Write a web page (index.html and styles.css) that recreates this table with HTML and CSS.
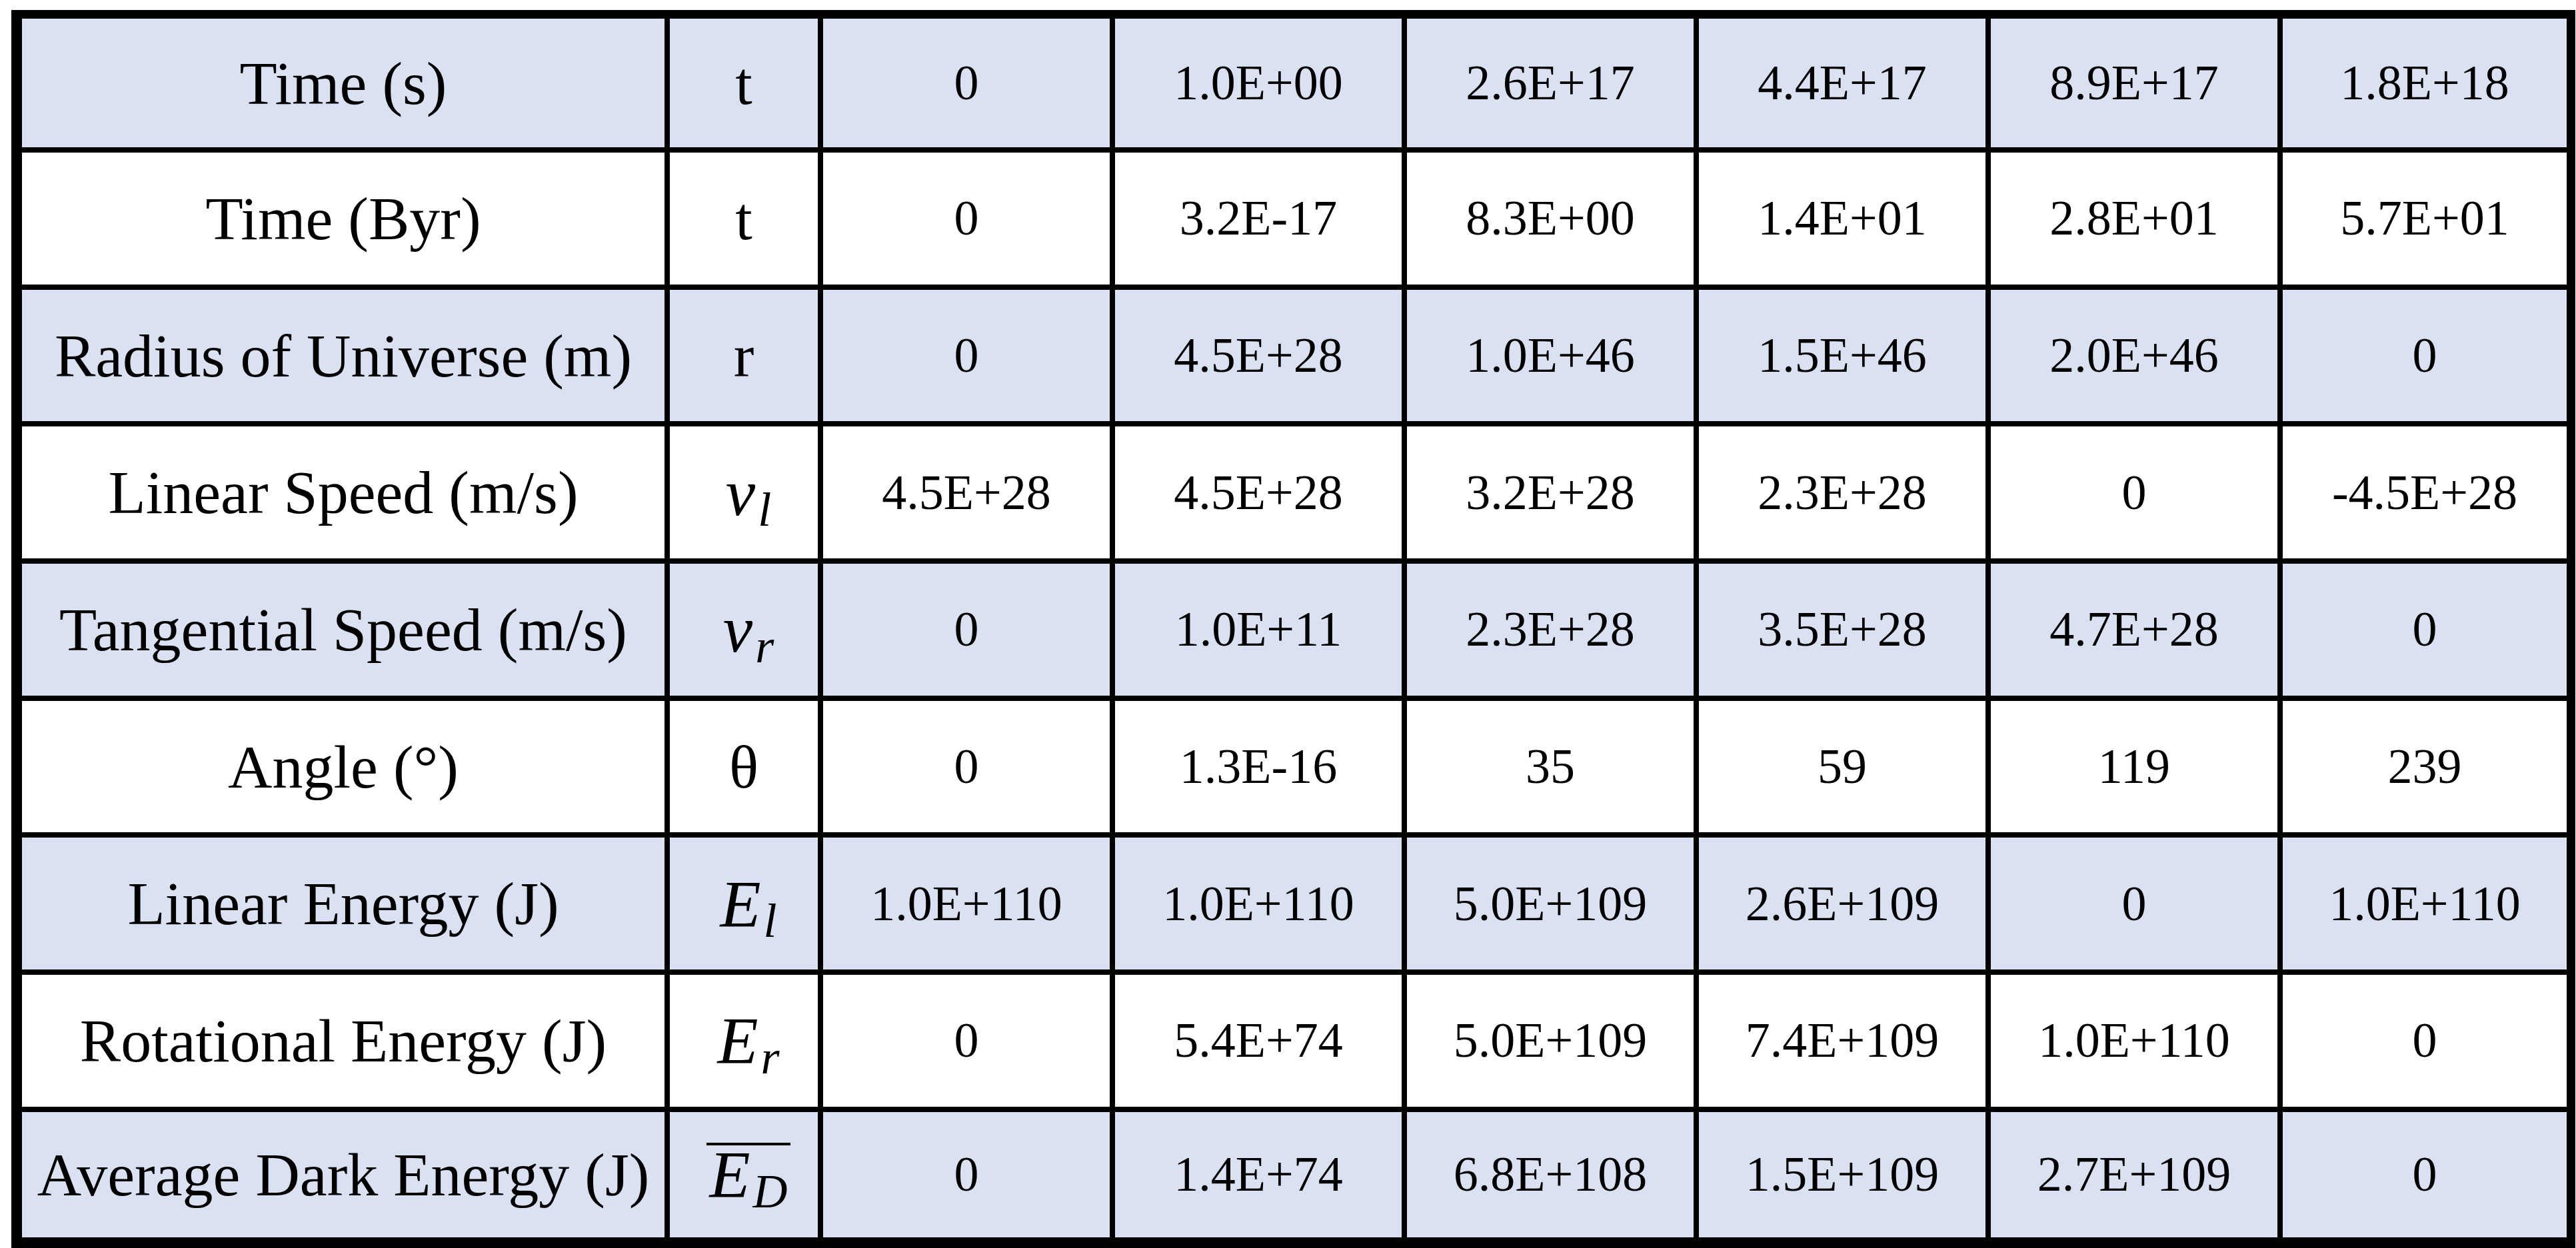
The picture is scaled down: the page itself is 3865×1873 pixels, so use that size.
FILE: index.html
```html
<!DOCTYPE html>
<html lang="en">
<head>
  <meta charset="UTF-8">
  <meta name="viewport" content="width=device-width, initial-scale=1.0">
  <title>Universe Expansion Table</title>
  <link rel="stylesheet" href="styles.css">
</head>
<body>
  <table class="data-table">
    <colgroup>
      <col class="col-label">
      <col class="col-symbol">
      <col class="col-value">
      <col class="col-value">
      <col class="col-value">
      <col class="col-value">
      <col class="col-value">
      <col class="col-last">
    </colgroup>
    <tbody>
      <!-- Time -->
      <tr class="shaded">
        <td class="label">Time (s)</td>
        <td class="symbol">t</td>
        <td>0</td>
        <td>1.0E+00</td>
        <td>2.6E+17</td>
        <td>4.4E+17</td>
        <td>8.9E+17</td>
        <td>1.8E+18</td>
      </tr>
      <tr>
        <td class="label">Time (Byr)</td>
        <td class="symbol">t</td>
        <td>0</td>
        <td>3.2E-17</td>
        <td>8.3E+00</td>
        <td>1.4E+01</td>
        <td>2.8E+01</td>
        <td>5.7E+01</td>
      </tr>

      <!-- Size and speeds -->
      <tr class="shaded">
        <td class="label">Radius of Universe (m)</td>
        <td class="symbol">r</td>
        <td>0</td>
        <td>4.5E+28</td>
        <td>1.0E+46</td>
        <td>1.5E+46</td>
        <td>2.0E+46</td>
        <td>0</td>
      </tr>
      <tr>
        <td class="label">Linear Speed (m/s)</td>
        <td class="symbol"><span class="math">v<sub>l</sub></span></td>
        <td>4.5E+28</td>
        <td>4.5E+28</td>
        <td>3.2E+28</td>
        <td>2.3E+28</td>
        <td>0</td>
        <td>-4.5E+28</td>
      </tr>
      <tr class="shaded">
        <td class="label">Tangential Speed (m/s)</td>
        <td class="symbol"><span class="math">v<sub>r</sub></span></td>
        <td>0</td>
        <td>1.0E+11</td>
        <td>2.3E+28</td>
        <td>3.5E+28</td>
        <td>4.7E+28</td>
        <td>0</td>
      </tr>
      <tr>
        <td class="label">Angle (°)</td>
        <td class="symbol">θ</td>
        <td>0</td>
        <td>1.3E-16</td>
        <td>35</td>
        <td>59</td>
        <td>119</td>
        <td>239</td>
      </tr>

      <!-- Energies -->
      <tr class="shaded">
        <td class="label">Linear Energy (J)</td>
        <td class="symbol"><span class="math">E<sub>l</sub></span></td>
        <td>1.0E+110</td>
        <td>1.0E+110</td>
        <td>5.0E+109</td>
        <td>2.6E+109</td>
        <td>0</td>
        <td>1.0E+110</td>
      </tr>
      <tr>
        <td class="label">Rotational Energy (J)</td>
        <td class="symbol"><span class="math">E<sub>r</sub></span></td>
        <td>0</td>
        <td>5.4E+74</td>
        <td>5.0E+109</td>
        <td>7.4E+109</td>
        <td>1.0E+110</td>
        <td>0</td>
      </tr>
      <tr class="shaded">
        <td class="label">Average Dark Energy (J)</td>
        <td class="symbol"><span class="math"><span class="bar">E<sub>D</sub></span></span></td>
        <td>0</td>
        <td>1.4E+74</td>
        <td>6.8E+108</td>
        <td>1.5E+109</td>
        <td>2.7E+109</td>
        <td>0</td>
      </tr>
    </tbody>
  </table>
</body>
</html>
```

FILE: styles.css
```css
body {
  margin: 0;
  background-color: #fff;
  font-family: "Liberation Serif", "Times New Roman", serif;
  color: #000;
}

/* black background shows through the cell spacing as grid lines */
.data-table {
  box-sizing: border-box;
  width: 3847px;
  margin: 15px 0 0 17px;
  table-layout: fixed;
  border-collapse: separate;
  border-spacing: 8px;
  padding: 5px 5px 8px 8px;
  background-color: #000;
}

.col-label {
  width: 964px;
}

.col-symbol {
  width: 222px;
}

.col-value {
  width: 430px;
}

.col-last {
  width: 426px;
}

.data-table td {
  height: 197.7px;
  padding: 0;
  text-align: center;
  vertical-align: middle;
  white-space: nowrap;
  font-size: 74px;
  background-color: #fff;
}

.data-table tr:first-child td {
  height: 193px;
}

.data-table tr:last-child td {
  height: 188px;
}

.data-table tr.shaded td {
  background-color: #d9e1f2; /* light blue band */
}

.data-table td.label,
.data-table td.symbol {
  font-size: 92px;
}

.math {
  display: inline-block;
  padding-left: 14px;
  font-size: 100px;
  font-style: italic;
}

.math sub {
  margin-left: 4px;
  font-size: 0.72em;
  line-height: 0;
  vertical-align: -16px;
}

.bar {
  display: inline-block;
  line-height: 0.88;
  padding: 0 4px;
  border-top: 4px solid #000;
}
```
